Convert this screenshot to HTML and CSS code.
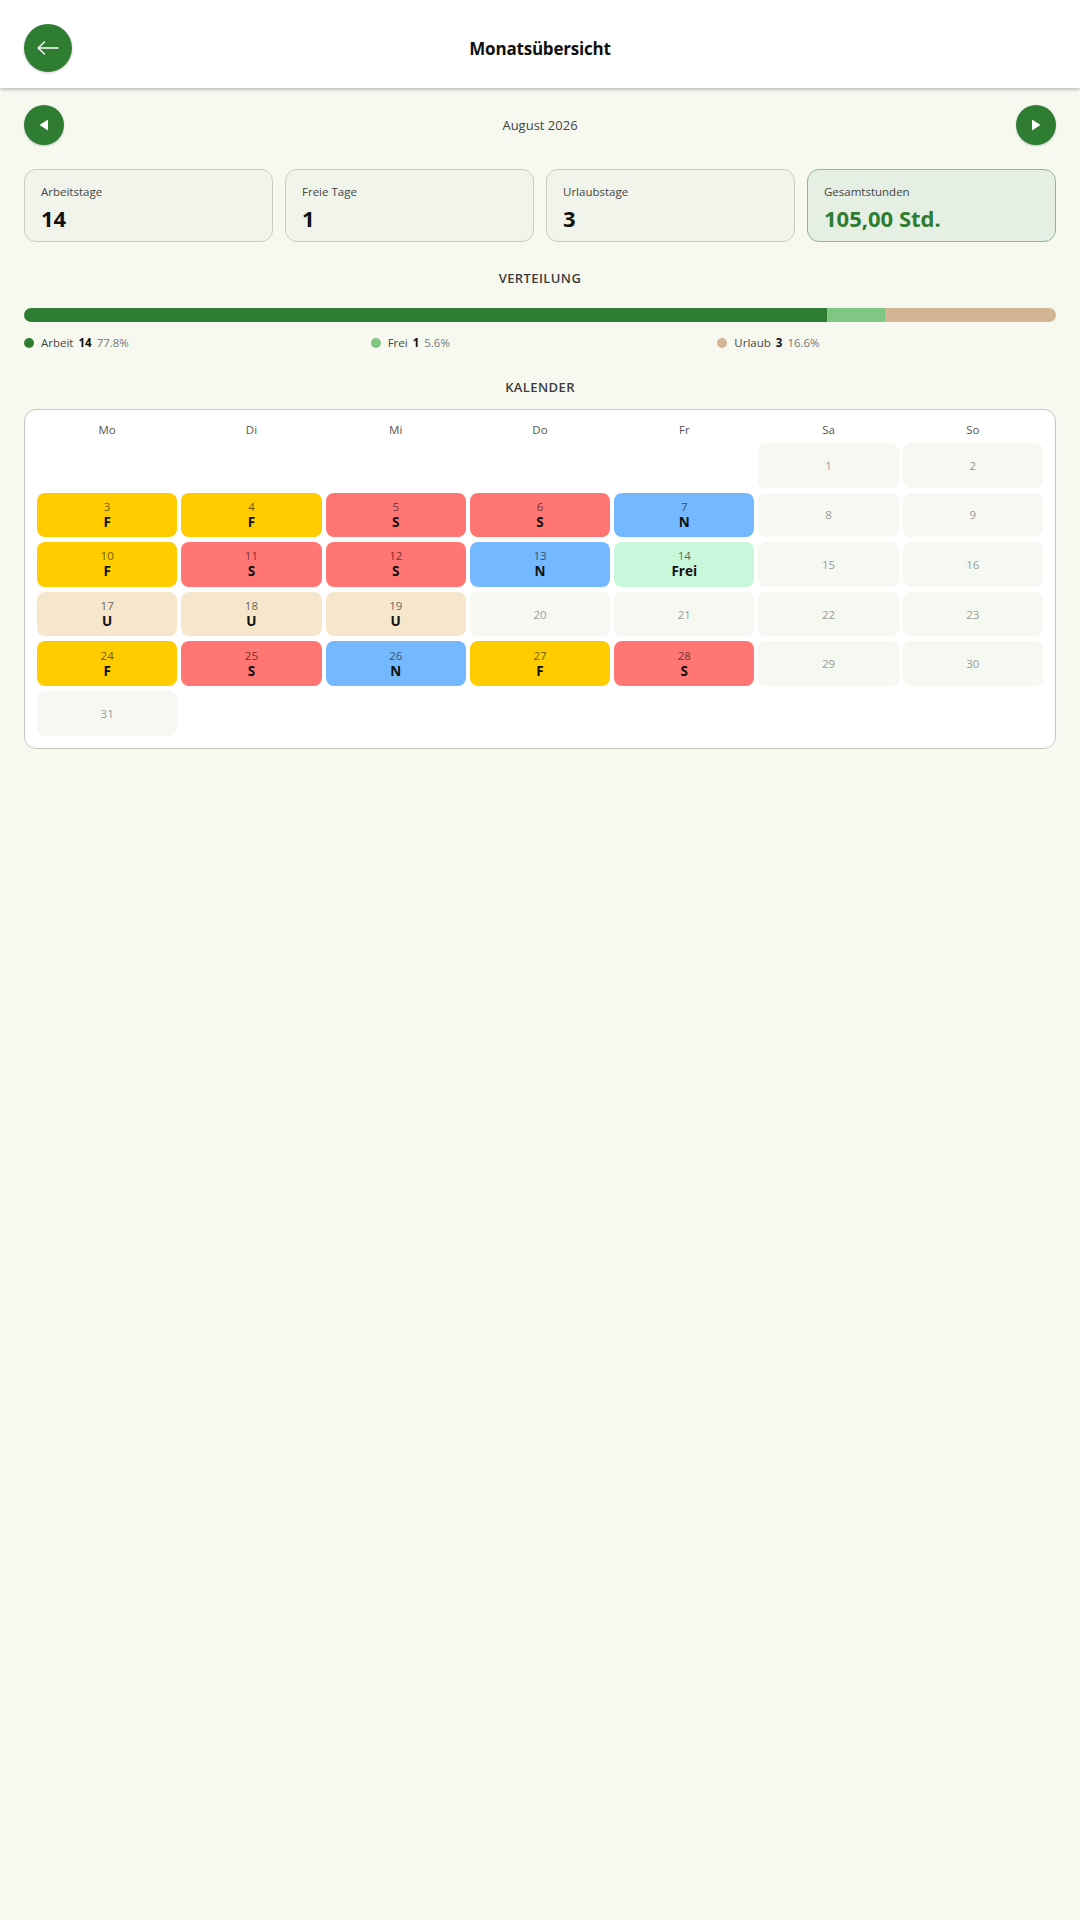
FILE: index.html
```html
<!DOCTYPE html>
<html lang="de">
<head>
    <meta charset="UTF-8">
    <meta name="viewport" content="width=device-width, initial-scale=1.0">
    <title>Monatsübersicht</title>
    <link rel="stylesheet" href="styles.css">
</head>
<body>
    <header class="topbar">
        <button class="back-btn" type="button">
            <svg width="24" height="16" viewBox="0 0 24 16"><path d="M2 8 H22 M2 8 L8.5 2 M2 8 L8.5 14" stroke="#fff" stroke-width="1.4" fill="none" stroke-linecap="round"/></svg>
        </button>
        <h1 class="topbar-title">Monatsübersicht</h1>
        <span></span>
    </header>

    <main class="page">
        <div class="month-nav">
            <button class="nav-btn" type="button">
                <svg width="16" height="16" viewBox="0 0 16 16"><path d="M12 2.5 L12 13.5 L3.5 8 Z" fill="#fff"/></svg>
            </button>
            <span class="month-label">August 2026</span>
            <button class="nav-btn" type="button">
                <svg width="16" height="16" viewBox="0 0 16 16"><path d="M4 2.5 L4 13.5 L12.5 8 Z" fill="#fff"/></svg>
            </button>
        </div>

        <div class="stats">
            <div class="stat-card">
                <div class="stat-label">Arbeitstage</div>
                <div class="stat-value">14</div>
            </div>
            <div class="stat-card">
                <div class="stat-label">Freie Tage</div>
                <div class="stat-value">1</div>
            </div>
            <div class="stat-card">
                <div class="stat-label">Urlaubstage</div>
                <div class="stat-value">3</div>
            </div>
            <div class="stat-card highlight">
                <div class="stat-label">Gesamtstunden</div>
                <div class="stat-value">105,00 Std.</div>
            </div>
        </div>

        <h2 class="section-title">VERTEILUNG</h2>
        <div class="dist-bar">
            <div class="seg seg-work" style="width: 77.8%"></div>
            <div class="seg seg-free" style="width: 5.6%"></div>
            <div class="seg seg-vac" style="width: 16.6%"></div>
        </div>
        <div class="legend">
            <div class="legend-item"><span class="dot dot-work"></span>Arbeit <b>14</b> <span class="pct">77.8%</span></div>
            <div class="legend-item"><span class="dot dot-free"></span>Frei <b>1</b> <span class="pct">5.6%</span></div>
            <div class="legend-item"><span class="dot dot-vac"></span>Urlaub <b>3</b> <span class="pct">16.6%</span></div>
        </div>

        <h2 class="section-title cal-title">KALENDER</h2>
        <div class="calendar">
            <div class="weekday">Mo</div>
            <div class="weekday">Di</div>
            <div class="weekday">Mi</div>
            <div class="weekday">Do</div>
            <div class="weekday">Fr</div>
            <div class="weekday">Sa</div>
            <div class="weekday">So</div>

            <div class="day blank"></div>
            <div class="day blank"></div>
            <div class="day blank"></div>
            <div class="day blank"></div>
            <div class="day blank"></div>
            <div class="day off"><span class="num">1</span></div>
            <div class="day off"><span class="num">2</span></div>

            <div class="day early"><span class="num">3</span><span class="code">F</span></div>
            <div class="day early"><span class="num">4</span><span class="code">F</span></div>
            <div class="day late"><span class="num">5</span><span class="code">S</span></div>
            <div class="day late"><span class="num">6</span><span class="code">S</span></div>
            <div class="day night"><span class="num">7</span><span class="code">N</span></div>
            <div class="day off"><span class="num">8</span></div>
            <div class="day off"><span class="num">9</span></div>

            <div class="day early"><span class="num">10</span><span class="code">F</span></div>
            <div class="day late"><span class="num">11</span><span class="code">S</span></div>
            <div class="day late"><span class="num">12</span><span class="code">S</span></div>
            <div class="day night"><span class="num">13</span><span class="code">N</span></div>
            <div class="day free"><span class="num">14</span><span class="code">Frei</span></div>
            <div class="day off"><span class="num">15</span></div>
            <div class="day off"><span class="num">16</span></div>

            <div class="day vacation"><span class="num">17</span><span class="code">U</span></div>
            <div class="day vacation"><span class="num">18</span><span class="code">U</span></div>
            <div class="day vacation"><span class="num">19</span><span class="code">U</span></div>
            <div class="day off"><span class="num">20</span></div>
            <div class="day off"><span class="num">21</span></div>
            <div class="day off"><span class="num">22</span></div>
            <div class="day off"><span class="num">23</span></div>

            <div class="day early"><span class="num">24</span><span class="code">F</span></div>
            <div class="day late"><span class="num">25</span><span class="code">S</span></div>
            <div class="day night"><span class="num">26</span><span class="code">N</span></div>
            <div class="day early"><span class="num">27</span><span class="code">F</span></div>
            <div class="day late"><span class="num">28</span><span class="code">S</span></div>
            <div class="day off"><span class="num">29</span></div>
            <div class="day off"><span class="num">30</span></div>

            <div class="day off"><span class="num">31</span></div>
        </div>
    </main>
</body>
</html>
```

FILE: styles.css
```css
body {
    margin: 0;
    background: #f7f9f1;
    color: #222;
    font-family: 'Open Sans', 'Noto Sans', sans-serif;
    min-height: 100vh;
}

.topbar {
    display: grid;
    grid-template-columns: 48px 1fr 48px;
    align-items: center;
    background: #fff;
    padding: 24px 24px 16px;
    box-shadow: 0 2px 3px rgba(0, 0, 0, 0.22);
}

.back-btn {
    width: 48px;
    height: 48px;
    border: none;
    border-radius: 50%;
    background: #2e7d32;
    display: flex;
    align-items: center;
    justify-content: center;
    padding: 0;
    box-shadow: 0 1px 3px rgba(0, 0, 0, 0.2);
    cursor: pointer;
}

.topbar-title {
    margin: 0;
    text-align: center;
    font-size: 17px;
    font-weight: 700;
    color: #111;
    letter-spacing: -0.2px;
}

.page {
    padding: 17px 24px 24px;
}

.month-nav {
    display: flex;
    justify-content: space-between;
    align-items: center;
}

.nav-btn {
    width: 40px;
    height: 40px;
    border: none;
    border-radius: 50%;
    background: #2e7d32;
    display: flex;
    align-items: center;
    justify-content: center;
    padding: 0;
    box-shadow: 0 1px 2px rgba(0, 0, 0, 0.2);
    cursor: pointer;
}

.month-label {
    font-size: 13px;
    color: #444;
}

.stats {
    display: grid;
    grid-template-columns: repeat(4, 1fr);
    gap: 12px;
    margin-top: 24px;
}

.stat-card {
    background: #f1f4ea;
    border: 1px solid #c9cdc1;
    border-radius: 12px;
    padding: 14px 16px 9px;
}

.stat-card.highlight {
    background: #e5efe4;
    border-color: #93b592;
}

.stat-label {
    font-size: 11.5px;
    line-height: 16px;
    color: #444;
}

.stat-value {
    margin-top: 4px;
    font-size: 22px;
    line-height: 28px;
    font-weight: 700;
    color: #111;
}

.stat-card.highlight .stat-value {
    color: #2e7d32;
}

.section-title {
    margin: 27px 0 0;
    text-align: center;
    font-size: 13px;
    line-height: 18px;
    font-weight: 600;
    letter-spacing: 0.4px;
    color: #3d3d3d;
}

.dist-bar {
    display: flex;
    height: 14px;
    margin-top: 21px;
    border-radius: 7px;
    overflow: hidden;
}

.seg-work { background: #2e7d32; }
.seg-free { background: #81c784; }
.seg-vac { background: #d4b593; }

.legend {
    display: grid;
    grid-template-columns: repeat(3, 1fr);
    gap: 8px;
    margin-top: 13px;
}

.legend-item {
    display: flex;
    align-items: center;
    gap: 5px;
    font-size: 11.5px;
    line-height: 16px;
    color: #444;
}

.legend-item b {
    color: #111;
}

.legend-item .pct {
    color: #777;
}

.dot {
    width: 10px;
    height: 10px;
    border-radius: 50%;
    margin-right: 2px;
}

.dot-work { background: #2e7d32; }
.dot-free { background: #81c784; }
.dot-vac { background: #d4b593; }

.cal-title {
    margin-top: 27px;
}

.calendar {
    display: grid;
    grid-template-columns: repeat(7, 1fr);
    grid-template-rows: 16px;
    grid-auto-rows: 44.6px;
    column-gap: 4px;
    row-gap: 5px;
    margin-top: 13px;
    background: #fff;
    border: 1px solid #c4c8bd;
    border-radius: 12px;
    padding: 12px;
}

.weekday {
    text-align: center;
    font-size: 11.5px;
    line-height: 16px;
    height: 16px;
    color: #555;
    align-self: start;
}

.day {
    border-radius: 8px;
    display: flex;
    flex-direction: column;
    align-items: center;
    justify-content: center;
}

.day .num {
    font-size: 11.5px;
    line-height: 15px;
    color: rgba(0, 0, 0, 0.6);
}

.day .code {
    font-size: 13.5px;
    line-height: 17px;
    font-weight: 700;
    color: #111;
}

.day.blank { background: transparent; }
.day.off { background: #f6f8f2; }
.day.off .num { color: #9a9a9a; }
.day.early { background: #ffcc00; }
.day.late { background: #ff7675; }
.day.night { background: #74b9ff; }
.day.free { background: #c8f7dc; }
.day.vacation { background: #f5e6cc; }
```
